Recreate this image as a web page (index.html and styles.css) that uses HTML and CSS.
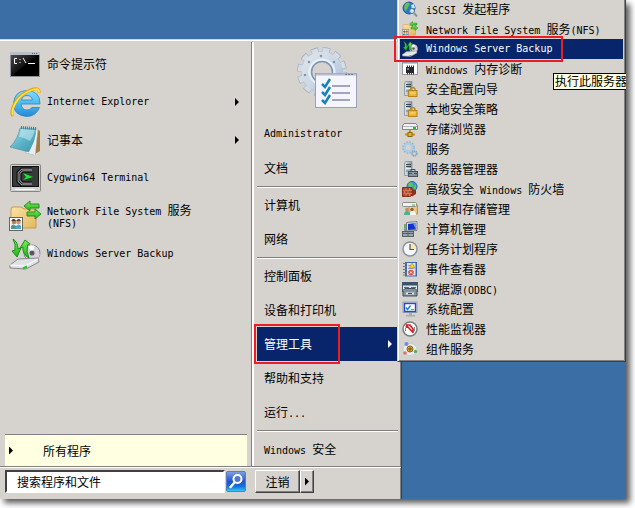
FILE: index.html
```html
<!DOCTYPE html>
<html lang="zh-CN">
<head>
  <meta charset="UTF-8">
  <meta name="viewport" content="width=device-width, initial-scale=1.0">
  <title>开始菜单</title>
  <link rel="stylesheet" href="styles.css">
</head>
<body>
  <!-- Shared gradients and icon parts -->
  <svg class="defs" width="0" height="0" aria-hidden="true">
    <defs>
      <linearGradient id="g-black" x1="0" y1="0" x2="1" y2="1">
        <stop offset="0" stop-color="#555"/><stop offset=".5" stop-color="#111"/><stop offset=".52" stop-color="#000"/><stop offset="1" stop-color="#000"/>
      </linearGradient>
      <linearGradient id="g-ie" x1="0" y1="0" x2="0" y2="1">
        <stop offset="0" stop-color="#8adcf8"/><stop offset=".6" stop-color="#3fb4ec"/><stop offset="1" stop-color="#2a86d0"/>
      </linearGradient>
      <linearGradient id="g-note" x1="0" y1="0" x2="1" y2="1">
        <stop offset="0" stop-color="#a9dce8"/><stop offset=".5" stop-color="#5fb6cb"/><stop offset="1" stop-color="#3b93ab"/>
      </linearGradient>
      <linearGradient id="g-folder" x1="0" y1="0" x2="1" y2="1">
        <stop offset="0" stop-color="#fbe3a4"/><stop offset="1" stop-color="#e3b860"/>
      </linearGradient>
      <linearGradient id="g-green" x1="0" y1="0" x2="0" y2="1">
        <stop offset="0" stop-color="#7fea5c"/><stop offset="1" stop-color="#22b01f"/>
      </linearGradient>
      <linearGradient id="g-gear" x1="0" y1="0" x2="1" y2="1">
        <stop offset="0" stop-color="#dde3ea"/><stop offset=".5" stop-color="#ccd8e6"/><stop offset="1" stop-color="#a9bfda"/>
      </linearGradient>
      <linearGradient id="g-search" x1="0" y1="0" x2="0" y2="1">
        <stop offset="0" stop-color="#7fa3e6"/><stop offset=".5" stop-color="#2352c4"/><stop offset=".75" stop-color="#1173dd"/><stop offset="1" stop-color="#35d0f5"/>
      </linearGradient>
      <linearGradient id="g-server" x1="0" y1="0" x2="1" y2="0">
        <stop offset="0" stop-color="#dfe6ea"/><stop offset="1" stop-color="#7d8d98"/>
      </linearGradient>
      <symbol id="i-nfs" viewBox="0 0 32 32">
        <path d="M2 9 L3 7 H12 L15 9 H27 V28 H2Z" fill="url(#g-folder)" stroke="#c89c4c"/>
        <path d="M15 6 L21 1 V4 H30 V8 H21 V11Z" fill="url(#g-green)" stroke="#27901e"/>
        <path d="M32 14 L26 9 V12 H18 V16 H26 V19Z" fill="url(#g-green)" stroke="#27901e"/>
        <rect x=".5" y="17.500" width="13" height="13" fill="#f4f6f8" stroke="#666"/>
        <circle cx="5" cy="22" r="2.300" fill="#b5805c"/><path d="M2 21 Q5 17 7 21Z" fill="#413026"/>
        <circle cx="9.500" cy="22" r="2.300" fill="#c89472"/><path d="M7 21 Q10 17 12 21Z" fill="#5b3a22"/>
        <path d="M2 29 V26 Q4 23 7 26 V29Z" fill="#4d9a8a"/><path d="M7 29 V26 Q10 23 12 26 V29Z" fill="#53a0c4"/>
      </symbol>
      <symbol id="i-backup" viewBox="0 0 32 32">
        <circle cx="23" cy="15" r="8" fill="#d4d6da" stroke="#85888d"/>
        <path d="M23 15 L19 8 A8 8 0 0 1 26 8Z" fill="#fff"/><path d="M23 15 L31 16 A8 8 0 0 1 28 21Z" fill="#e8c8e4"/>
        <circle cx="23" cy="15" r="2.500" fill="#55585e"/>
        <path d="M1 27 L9 21 L29 20 L30 24 L17 31 L1 30Z" fill="#dfe1e4" stroke="#85888d"/>
        <path d="M1 27 L16 28 L29 21" fill="none" stroke="#fff"/><path d="M14 30.500 L18 28.500" stroke="#1cc81c" stroke-width="2"/>
        <path d="M4 1 Q9 4 9 11 L12 10 L8 19 L3 13 L6 12 Q7 6 4 1Z" fill="url(#g-green)" stroke="#179116"/>
        <path d="M20 20 Q13 16 14 9 L11 10 L16 2 L21 6 L18.500 7 Q17 14 20 20Z" fill="url(#g-green)" stroke="#179116"/>
      </symbol>
      <symbol id="i-tower" viewBox="0 0 16 16">
        <path d="M2.500 1.500 L4 .5 H10 V14.500 H2.500Z" fill="url(#g-server)" stroke="#8494a0" stroke-width=".8"/>
        <path d="M4 3.500H9M4 5.500H9" stroke="#384650"/><path d="M4 7.500H9" stroke="#e9eef1"/><path d="M4 10h2" stroke="#2f8fd8"/>
      </symbol>
      <symbol id="i-lock" viewBox="0 0 16 16">
        <use href="#i-tower"/>
        <path d="M8.500 10 V8.500 Q8.500 6.500 10.700 6.500 T13 8.500 V10" fill="none" stroke="#b98a24" stroke-width="1.500"/>
        <rect x="6.500" y="9.500" width="8.500" height="6" fill="#e8b83a" stroke="#b98420"/><path d="M8 12h5.500" stroke="#f9e08a"/>
      </symbol>
    </defs>
  </svg>

  <main class="desktop">
    <nav class="start-menu" aria-label="开始菜单">
      <div class="columns">
        <section class="programs">
          <ul class="program-list">
            <li><a class="program" href="#">
              <svg class="icon-lg" viewBox="0 0 32 32">
                <rect x="1.500" y="4.500" width="29" height="24" fill="url(#g-black)" stroke="#8d929a"/>
                <path d="M1 5.500H31" stroke="#b9bfca" stroke-width="3"/><path d="M23 5.500h6" stroke="#555e70" stroke-dasharray="1 1"/>
                <path d="M8 10.500H5.500V15.500H8M11 11v1M11 14v1M14 10l3 5M19 15.500h7" fill="none" stroke="#fff"/>
              </svg>
              命令提示符</a></li>
            <li><a class="program" href="#">
              <svg class="icon-lg" viewBox="0 0 32 32">
                <path d="M31 18 H12 Q13 24 18 24 Q21 24 23 21.500 H30.500 Q27 30.500 17.500 30.500 Q4.500 29.500 4.500 17.500 Q5.500 5 17.500 4.500 Q31.500 5 31 18Z M12.500 14 H23.500 Q22.500 9.500 18 9.500 Q13.500 9.500 12.500 14Z" fill="url(#g-ie)" fill-rule="evenodd" stroke="#2288cb" stroke-width=".8"/>
                <path d="M30 7 Q31 1 23 3.500 Q12 7 6 17 Q1 26 4 30" fill="none" stroke="#e2a60f" stroke-width="3"/>
                <path d="M30 6.500 Q30.500 1.500 23 4 Q12 7.500 6.500 17 Q2 25 4 29" fill="none" stroke="#ffe04a" stroke-width="1.800"/>
              </svg>
              <span class="latin">Internet Explorer</span><span class="arrow"></span></a></li>
            <li><a class="program" href="#">
              <svg class="icon-lg" viewBox="0 0 32 32">
                <path d="M28 5 L31 7 V27 L26 30Z" fill="#a87c3c"/>
                <path d="M12 4 L29 5 L26 31 L17 29Z" fill="#f5fafb" stroke="#9db0b5" stroke-width=".6"/>
                <path d="M11 4 L27 5 Q26 18 20 28 L1 23 Q9 15 11 4Z" fill="url(#g-note)" stroke="#4d8c9c" stroke-width=".6"/>
                <path d="M12 5 L26 6 Q24 13 21 17 Q14 13 10 13Z" fill="#c5eaf1" opacity=".6"/>
                <path d="M20 28 L26 31 L27 14" fill="#e4eef0"/><path d="M12 3.500 L28 4.500" stroke="#67757b" stroke-width="3" stroke-dasharray="1 1"/>
              </svg>
              记事本<span class="arrow"></span></a></li>
            <li><a class="program" href="#">
              <svg class="icon-lg" viewBox="0 0 32 32">
                <rect x="1.500" y="2.500" width="30" height="27" rx="1" fill="#d2d2d2" stroke="#858585"/>
                <rect x="3.500" y="4.500" width="26" height="20" fill="#363b38" stroke="#111"/>
                <path d="M6 27.500h20" stroke="#fff"/>
                <path d="M23 8 H13 L10 11 V19 L13 22 H23" fill="none" stroke="#090909" stroke-width="5"/>
                <path d="M23 8 H13 L10 11 V19 L13 22 H23" fill="none" stroke="#d2d2d2" stroke-width="2.500"/>
                <path d="M23 8 H13 L10 11 V19 L13 22 H23" fill="none" stroke="#1b1e1c" stroke-width="1.200"/>
                <path d="M14 11 L24 15 L14 18 L17 15Z" fill="#20e339"/>
              </svg>
              <span class="latin">Cygwin64 Terminal</span></a></li>
            <li><a class="program" href="#">
              <svg class="icon-lg"><use href="#i-nfs"/></svg>
              <span><span class="latin">Network File System </span>服务<br><span class="latin">(NFS)</span></span></a></li>
            <li><a class="program" href="#">
              <svg class="icon-lg"><use href="#i-backup"/></svg>
              <span class="latin">Windows Server Backup</span></a></li>
          </ul>
          <button class="all-programs" type="button"><span class="arrow"></span>所有程序</button>
        </section>

        <section class="places">
          <svg class="user-picture" viewBox="0 0 60 62">
            <!-- cog behind the check list -->
            <g fill="none">
              <circle cx="25" cy="25" r="21.500" stroke="#9fb0c6" stroke-width="7" stroke-dasharray="7 4.258"/>
              <circle cx="25" cy="25" r="15.500" stroke="#a9b9cd" stroke-width="11"/>
              <circle cx="25" cy="25" r="21" stroke="#d3dce7" stroke-width="6.500" stroke-dasharray="6 4.996" stroke-dashoffset="-.4"/>
              <circle cx="25" cy="25" r="15.500" stroke="url(#g-gear)" stroke-width="10"/>
              <circle cx="25" cy="25" r="10.500" stroke="#7e95b4" stroke-width="1.500"/>
              <circle cx="25" cy="25" r="12.500" stroke="#e8f0fa" stroke-width="2"/>
            </g>
            <g fill="#8496ae"><circle cx="24" cy="9" r="1.300"/><circle cx="12" cy="15" r="1.300"/><circle cx="8" cy="28" r="1.300"/><circle cx="37" cy="15" r="1.300"/></g>
            <rect x="18.500" y="26.500" width="41" height="34" fill="#f5f5fd" stroke="#9aa0b8"/>
            <path d="M19 27.500H59" stroke="#b5bbd0" stroke-width="2"/><path d="M48 27.500h9" stroke="#6f7b98" stroke-dasharray="2 1"/>
            <path d="M35 39h18M35 46h18M35 53h18" stroke="#8a87aa" stroke-width="1.500"/>
            <path d="M25 37l3 3 5-8M25 45l3 3 5-8M25 53l3 3 5-8" fill="none" stroke="#1682bd" stroke-width="2.500"/>
          </svg>
          <ul class="place-list">
            <li><a class="place" href="#"><span class="latin">Administrator</span></a></li>
            <li><a class="place" href="#">文档</a></li>
            <li class="divided"><a class="place" href="#">计算机</a></li>
            <li><a class="place" href="#">网络</a></li>
            <li class="divided"><a class="place" href="#">控制面板</a></li>
            <li><a class="place" href="#">设备和打印机</a></li>
            <li><a class="place selected marked" href="#">管理工具<span class="arrow"></span></a></li>
            <li><a class="place" href="#">帮助和支持</a></li>
            <li><a class="place" href="#"><span>运行<span class="latin">...</span></span></a></li>
            <li class="divided"><a class="place" href="#"><span><span class="latin">Windows </span>安全</span></a></li>
          </ul>
        </section>
      </div>

      <form class="footer">
        <input class="search-box" type="text" placeholder="搜索程序和文件" aria-label="搜索程序和文件">
        <button class="search-button" type="button" aria-label="搜索">
          <svg viewBox="0 0 20 21">
            <rect x=".5" y=".5" width="19" height="20" rx="1.500" fill="url(#g-search)" stroke="#5a7fc0"/>
            <path d="M9 11 L4.500 16" stroke="#fff" stroke-width="2.500" stroke-linecap="round"/>
            <circle cx="11.500" cy="8" r="4" fill="#4a78d4" stroke="#fff" stroke-width="2"/>
          </svg>
        </button>
        <div class="session">
          <button class="log-off" type="button">注销</button>
          <button class="log-off-more" type="button" aria-label="更多"><span class="arrow"></span></button>
        </div>
      </form>
    </nav>

    <nav class="submenu" aria-label="管理工具">
      <ul class="tool-list">
        <li><a class="tool" href="#">
          <svg class="icon-sm" viewBox="0 0 16 16"><circle cx="7" cy="7" r="6" fill="#2b78cc" stroke="#2c568c"/><path d="M3 3 Q6 0 8 3 L6 6 L4 10 L2 7Z" fill="#5cc34e"/><path d="M9 4l3-1 1 4-3 1z" fill="#bfe6f7"/><circle cx="10" cy="10" r="2.500" fill="#cbeefd" stroke="#4f7488"/><path d="M12 12l3 3.500" stroke="#8797a3" stroke-width="2"/></svg>
          <span><span class="latin">iSCSI </span>发起程序</span></a></li>
        <li><a class="tool" href="#">
          <svg class="icon-sm"><use href="#i-nfs"/></svg>
          <span><span class="latin">Network File System </span>服务<span class="latin">(NFS)</span></span></a></li>
        <li><a class="tool selected marked" href="#">
          <svg class="icon-sm"><use href="#i-backup"/></svg>
          <span class="latin">Windows Server Backup</span></a></li>
        <li><a class="tool" href="#">
          <svg class="icon-sm" viewBox="0 0 16 16"><rect x=".5" y="1.500" width="15" height="12" fill="#fff" stroke="#969da8"/><path d="M1 2.500h14" stroke="#c3cad6"/><path d="M4 6h8v6H4z" fill="#24282b"/><path d="M5 5.500h7M5 12.500h7" stroke="#333" stroke-width="2" stroke-dasharray="1 1"/><path d="M5 7h2v2H5z" fill="#77808a"/></svg>
          <span><span class="latin">Windows </span>内存诊断</span></a></li>
        <li><a class="tool" href="#"><svg class="icon-sm"><use href="#i-lock"/></svg>安全配置向导</a></li>
        <li><a class="tool" href="#"><svg class="icon-sm"><use href="#i-lock"/></svg>本地安全策略</a></li>
        <li><a class="tool" href="#">
          <svg class="icon-sm" viewBox="0 0 16 16"><path d="M2 2.500 H14 L15.500 5 V8.500 H.5 V5Z" fill="#f0f0f2" stroke="#85878c"/><path d="M1 5.500h14" stroke="#b6b8be"/><path d="M11 7h3" stroke="#1fc21f" stroke-width="2"/><path d="M8 9v4M3 13.500h10" stroke="#c98f1b" stroke-width="2"/><rect x="6" y="11.500" width="4" height="4" fill="#e5b23a" stroke="#8a6415"/></svg>
          存储浏览器</a></li>
        <li><a class="tool" href="#">
          <svg class="icon-sm" viewBox="0 0 16 16"><circle cx="6.500" cy="6.500" r="5.300" fill="none" stroke="#87afd0" stroke-width="2" stroke-dasharray="1.600 1.180"/><circle cx="6.500" cy="6.500" r="4" fill="none" stroke="#a9cdea" stroke-width="2.500"/><circle cx="12.500" cy="12.500" r="2.300" fill="none" stroke="#83a7c6" stroke-width="2" stroke-dasharray="1.300 .5"/></svg>
          服务</a></li>
        <li><a class="tool" href="#">
          <svg class="icon-sm" viewBox="0 0 16 16"><use href="#i-tower"/><rect x="6.500" y="10.500" width="9" height="5" fill="#84939f" stroke="#48545e"/><path d="M9 10V8.500h4V10M7 12.500h8" fill="none" stroke="#48545e"/><path d="M10.500 12.500h1" stroke="#fff"/></svg>
          服务器管理器</a></li>
        <li><a class="tool" href="#">
          <svg class="icon-sm" viewBox="0 0 16 16"><circle cx="10" cy="5.500" r="5" fill="#3a99dc" stroke="#2a659c"/><path d="M6 3l3-2 2 2-1 4-3-1zM12 5l2-1v4l-2 1z" fill="#5bc95a"/><path d="M.5 6.500 H10 V14 L8.500 15.500 H.5Z" fill="#b3492d" stroke="#7d2b1b"/><path d="M10 8l4 1v4l-4 2.500z" fill="#8b321f"/><path d="M1 9.500h9M1 12.500h9M4 7v2.500M7.500 7v2.500M2.500 10v2.500M6 10v2.500M4 13v2.500M7.500 13v2.500" stroke="#d98f74" stroke-width=".7"/></svg>
          <span>高级安全<span class="latin"> Windows </span>防火墙</span></a></li>
        <li><a class="tool" href="#">
          <svg class="icon-sm" viewBox="0 0 16 16"><path d="M7 4h8.500v9H7z" fill="url(#g-folder)" stroke="#bd9340"/><rect x=".5" y="1.500" width="14" height="4" rx="1" fill="#f1f1f1" stroke="#8d8d8d"/><path d="M10 4h3" stroke="#2fbf3a"/><circle cx="5" cy="8.500" r="1.800" fill="#c58a58"/><circle cx="10" cy="8.500" r="1.800" fill="#9b6039"/><path d="M2 14q0-4 3-4t3 4z" fill="#45b391"/><path d="M8 14q0-4 3-4t3 4z" fill="#f4f4f4"/></svg>
          共享和存储管理</a></li>
        <li><a class="tool" href="#">
          <svg class="icon-sm" viewBox="0 0 16 16"><path d="M4.500 1.500 L15 .5 V9.500 L4.500 10Z" fill="#d8dde1" stroke="#777f87"/><path d="M6 3l8-1v6.500l-8 .5z" fill="#1730c8"/><path d="M11 2.500l3-.5v6.500z" fill="#6b9cf0"/><rect x=".5" y="10.500" width="11" height="5" fill="#9aa6ad" stroke="#55616a"/><path d="M1 12.500h10M6 10.500v5" stroke="#55616a"/><path d="M2 3h2v7H2z" fill="#8a969e"/><path d="M2 5.500h1" stroke="#2bd02b" stroke-width="2"/></svg>
          计算机管理</a></li>
        <li><a class="tool" href="#">
          <svg class="icon-sm" viewBox="0 0 16 16"><circle cx="8" cy="8" r="7" fill="#f5f9fc" stroke="#8393a5" stroke-width="1.500"/><path d="M8 8V2A6 6 0 0 1 14 8Z" fill="#fbe5ae"/><path d="M8 3v5.500h4" fill="none" stroke="#4c5663" stroke-width="1.200"/></svg>
          任务计划程序</a></li>
        <li><a class="tool" href="#">
          <svg class="icon-sm" viewBox="0 0 16 16"><rect x="3" y="1" width="12" height="14.500" fill="#3e68ae"/><path d="M5 2h8.500v12.500H5z" fill="#dbe6f4"/><path d="M6 4.500h6M6 7.500h6M6 10.500h6" stroke="#8aa6c9"/><path d="M1 2.500h4M1 5.500h4M1 8.500h4M1 11.500h4M1 14h4" stroke="#6b7682"/><path d="M10 2l3 5H7z" fill="#f8d122" stroke="#a67d08" stroke-width=".5"/><circle cx="9" cy="11.500" r="2.700" fill="#dd4d3d"/><path d="M8 10.500l2 2m0-2l-2 2" stroke="#fff"/></svg>
          事件查看器</a></li>
        <li><a class="tool" href="#">
          <svg class="icon-sm" viewBox="0 0 16 16"><rect x=".5" y="1.500" width="15" height="9" fill="#dbe6ee" stroke="#43596d"/><path d="M1 3h14" stroke="#35546e" stroke-width="3"/><path d="M2 6.500h5M9 6.500h5" stroke="#546a7b"/><path d="M1 9.500L3 7.500h10l2 2v5.500H1z" fill="#83939b" stroke="#435058"/><path d="M4 12.500h8" stroke="#e9eff2" stroke-width="2"/><path d="M6 12.500h4" stroke="#3b474e"/></svg>
          <span>数据源<span class="latin">(ODBC)</span></span></a></li>
        <li><a class="tool" href="#">
          <svg class="icon-sm" viewBox="0 0 16 16"><rect x="1" y="1" width="14" height="10.500" fill="#d9dfe5" stroke="#9ca3ad"/><rect x="2.500" y="2.500" width="11" height="8" fill="#fff" stroke="#2547d8" stroke-width="1.400"/><path d="M4 6.500l1.500 2 3-4" fill="none" stroke="#1789ce" stroke-width="1.500"/><path d="M9 8.500h3" stroke="#888"/><path d="M7 12h3v2H7zM4 14h9v1.500H4z" fill="#a8adb4"/></svg>
          系统配置</a></li>
        <li><a class="tool" href="#">
          <svg class="icon-sm" viewBox="0 0 16 16"><circle cx="8" cy="8" r="7" fill="#fff" stroke="#777c80" stroke-width="1.500"/><path d="M3.500 7v3M12.500 6v4" stroke="#858585"/><path d="M4.500 4.500l7 7.500M4.500 7V4H8l3 4v3.500" fill="none" stroke="#d32127" stroke-width="1.700"/></svg>
          性能监视器</a></li>
        <li><a class="tool" href="#">
          <svg class="icon-sm" viewBox="0 0 16 16"><ellipse cx="8" cy="8.500" rx="7" ry="6" fill="#e9edf2" stroke="#c5cdd6"/><circle cx="4.500" cy="3" r="2" fill="#7a86dc"/><circle cx="3" cy="12" r="1.800" fill="#df7069"/><circle cx="13.500" cy="10.500" r="1.700" fill="#54b45a"/><circle cx="8" cy="8" r="3" fill="#e9b92b" stroke="#7d6212"/><path d="M8 6v4M6 8h4" stroke="#6d510a"/></svg>
          组件服务</a></li>
      </ul>
      <div class="tooltip" role="tooltip">执行此服务器</div>
    </nav>
  </main>
</body>
</html>
```
FILE: styles.css
```css
*, *::before, *::after {
  box-sizing: border-box;
}

body {
  margin: 0;
  padding: 0 9px 9px 0;
  background: white;
  color: #000;
  font-family: "Noto Sans CJK SC", sans-serif;
  font-size: 12px;
  line-height: 12px;
}

ul {
  margin: 0;
  padding: 0;
  list-style: none;
}

a {
  color: inherit;
  text-decoration: none;
}

button, input {
  font: inherit;
  color: inherit;
  margin: 0;
}

.defs {
  position: absolute;
}

/* Latin letters take half the width of a Chinese character */
.latin {
  font-family: "DejaVu Sans Mono", monospace;
  font-size: 10px;
  line-height: 8px;
  white-space: pre;
}

.desktop {
  position: relative;
  height: calc(100vh - 9px);
  min-height: 460px;
  overflow: hidden;
  background: #3a6ea5;
  box-shadow: 4px 4px 6px rgba(0, 0, 0, 0.65);
}

.arrow {
  width: 4px;
  height: 8px;
  margin-left: auto;
  background: currentColor;
  clip-path: polygon(0 0, 100% 50%, 0 100%);
}

.selected {
  background: #08246b;
  color: white;
}

/* Red frame round a highlighted item */
.marked {
  position: relative;
}

.marked::after {
  content: "";
  position: absolute;
  border: 2px solid #ed1c24;
}

/* Start menu */
.start-menu {
  position: absolute;
  left: 0;
  bottom: 0;
  width: 402px;
  background: #d6d3ce;
  border-top: 1px solid #d6d3ce;
  border-right: 1px solid #404040;
  box-shadow: inset 0 1px white, inset -1px 0 #808080;
}

.columns {
  display: flex;
  padding-top: 2px;
}

.programs {
  flex: 1;
  display: flex;
  flex-direction: column;
  padding: 3px 4px 0 5px;
  border-right: 1px solid #808080;
}

.program {
  display: flex;
  align-items: center;
  gap: 6px;
  height: 38px;
  padding: 0 8px 0 4px;
}

.icon-lg {
  width: 32px;
  height: 32px;
}

.all-programs {
  display: flex;
  align-items: center;
  gap: 30px;
  height: 32px;
  margin-top: auto;
  padding: 0 4px;
  border: 0;
  border-top: 1px solid #808080;
  background: #ffffe1;
}

.all-programs .arrow {
  margin-left: 0;
}

.places {
  width: 149px;
  padding: 5px 3px 0;
  border-left: 2px solid white;
}

.user-picture {
  display: block;
  width: 60px;
  height: 62px;
  margin: 0 auto 8px 40px;
}

.place {
  display: flex;
  align-items: center;
  height: 34px;
  padding: 0 6px 0 7px;
}

.place.marked::after {
  top: -3px;
  left: -3px;
  width: 86px;
  height: 40px;
}

.divided::before {
  content: "";
  display: block;
  height: 2px;
  margin-top: 1px;
  border-top: 1px solid #808080;
  border-bottom: 1px solid white;
}

.footer {
  display: flex;
  height: 33px;
  padding: 3px 5px 6px;
  border-top: 1px solid #808080;
  box-shadow: inset 0 1px white;
}

.search-box {
  width: 220px;
  padding: 0 10px;
  border: 2px solid;
  border-color: #404040 white white #404040;
  border-radius: 0;
  background: white;
}

.search-box::placeholder {
  color: #000;
  opacity: 1;
}

.search-button {
  width: 22px;
  padding: 1px;
  border: 0;
  background: none;
}

.search-button svg {
  display: block;
  width: 20px;
  height: 21px;
}

.session {
  display: flex;
  margin-left: 8px;
}

.log-off, .log-off-more {
  padding: 0 4px;
  border: 1px solid;
  border-color: white #404040 #404040 white;
  background: #d6d3ce;
  box-shadow: inset -1px -1px #808080;
}

.log-off {
  width: 45px;
}

.log-off-more {
  width: 14px;
}

.log-off-more .arrow {
  display: block;
}

/* Administrative tools */
.submenu {
  position: absolute;
  top: -4px;
  left: 397px;
  right: 0;
  padding: 1px;
  background: #d6d3ce;
  border: 1px solid;
  border-color: #d6d3ce #404040 #404040 #d6d3ce;
  box-shadow: inset 1px 1px white, inset -1px -1px #808080;
}

.tool-list {
  padding: 1px;
}

.tool {
  display: flex;
  align-items: center;
  gap: 8px;
  height: 20px;
  padding-left: 2px;
  white-space: nowrap;
}

.icon-sm {
  width: 16px;
  height: 16px;
}

.tool.marked::after {
  top: -3px;
  left: -6px;
  width: 169px;
  height: 26px;
}

.tooltip {
  position: absolute;
  top: 76px;
  left: 155px;
  padding: 1px 8px 2px 1px;
  border: 1px solid #000;
  background: #ffffe1;
  white-space: nowrap;
}
```
